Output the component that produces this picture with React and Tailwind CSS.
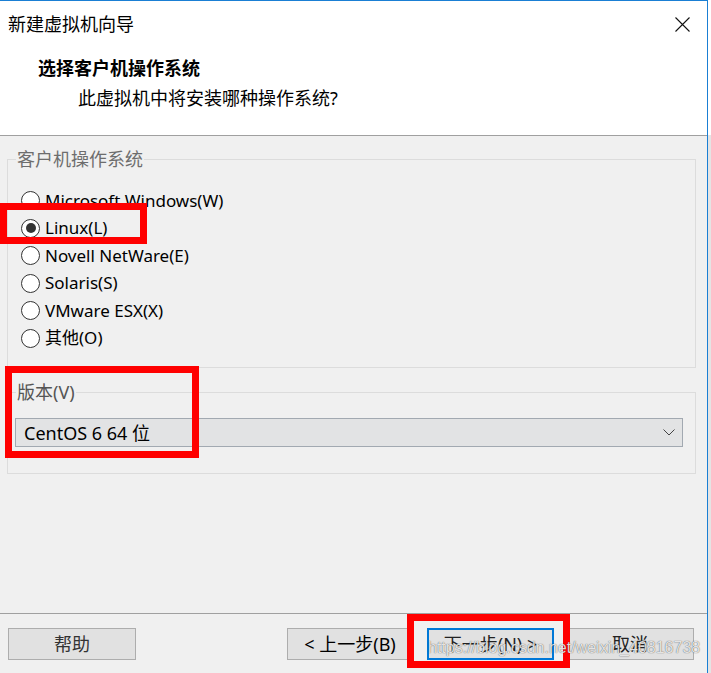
import React from 'react'

const FONT = { fontFamily: '"Noto Sans", "Noto Sans CJK SC", sans-serif' }

const OS_LIST = [
  { label: 'Microsoft Windows(W)' },
  { label: 'Linux(L)', checked: true },
  { label: 'Novell NetWare(E)' },
  { label: 'Solaris(S)' },
  { label: 'VMware ESX(X)' },
  { label: '其他(O)' },
]

function Radio({ checked }) {
  return (
    <span className="flex items-center justify-center w-[19px] h-[19px] rounded-full border border-[#333] bg-white shrink-0">
      {checked && <span className="w-[10px] h-[10px] rounded-full bg-[#333]" />}
    </span>
  )
}

function Button({ children, primary, className = '' }) {
  return (
    <button
      className={`h-[32px] flex items-center justify-center bg-[#e1e1e1] text-[18px] text-[#222] ${primary ? 'border-2 border-[#0078d7]' : 'border border-[#adadad]'} ${className}`}
    >
      {children}
    </button>
  )
}

export default function App() {
  return (
    <div className="relative flex w-[711px] h-[673px] overflow-hidden bg-[#f0f0f0]" style={FONT}>
      {/* window */}
      <div className="flex flex-col w-[708px] h-full border-t border-r border-[#1a7fd4]">
        {/* title + header */}
        <div className="h-[135px] bg-white border-b border-[#a0a0a0] shrink-0">
          <div className="h-[46px] flex items-center justify-between pl-[8px] pr-[17px]">
            <span className="text-[18px] leading-[24px] text-black">新建虚拟机向导</span>
            <svg width="15" height="15" viewBox="0 0 15 15">
              <path d="M0.5 0.5L14.5 14.5M14.5 0.5L0.5 14.5" stroke="#111" strokeWidth="1.1" fill="none" />
            </svg>
          </div>
          <div className="mt-[9px] pl-[38px] text-[18px] leading-[24px] font-bold text-black">选择客户机操作系统</div>
          <div className="mt-[6px] pl-[78px] text-[18px] leading-[24px] text-black">此虚拟机中将安装哪种操作系统?</div>
        </div>

        {/* body */}
        <div className="flex-1 pt-[13px]">
          <fieldset className="ml-[7px] w-[689px] border border-[#dcdcdc] px-0 pt-[18px] pb-[15px]">
            <legend className="ml-[8px] px-[1px] text-[18px] leading-[20px] text-[#6d6d6d]">客户机操作系统</legend>
            <div className="pl-[13px]">
              {OS_LIST.map((os) => (
                <div key={os.label} className="h-[27.5px] flex items-center gap-[5px]">
                  <Radio checked={os.checked} />
                  <span className="text-[17px] leading-[24px] text-black">{os.label}</span>
                </div>
              ))}
            </div>
          </fieldset>

          <fieldset className="mt-[14px] ml-[7px] w-[689px] border border-[#dcdcdc] px-0 pt-[16px] pb-[26px]">
            <legend className="ml-[8px] px-[1px] text-[18px] leading-[20px] text-[#555]">版本(V)</legend>
            <div className="ml-[7px] w-[668px] h-[29px] flex items-center justify-between pl-[8px] pr-[7px] bg-[#e2e3e4] border border-[#a2a9b1]">
              <span className="text-[18px] leading-[24px] text-black">CentOS 6 64 位</span>
              <svg width="12" height="7" viewBox="0 0 12 7">
                <path d="M0.5 0.5L6 6L11.5 0.5" stroke="#444" strokeWidth="1" fill="none" />
              </svg>
            </div>
          </fieldset>
        </div>

        {/* footer */}
        <div className="h-[60px] shrink-0 border-t border-[#a0a0a0] flex items-start pt-[14px] pl-[8px] pr-[13px]">
          <Button className="w-[128px] text-[#333]">帮助</Button>
          <div className="flex-1" />
          <Button className="w-[126px] text-black">&lt; 上一步(B)</Button>
          <Button primary className="w-[127px] ml-[14px]">下一步(N) &gt;</Button>
          <Button className="w-[128px] ml-[12px]">取消</Button>
        </div>
      </div>

      {/* strip of whatever lies behind the window */}
      <div className="w-[3px] h-full flex flex-col">
        <div className="h-[135px] bg-white" />
        <div className="flex-1 bg-[#e4e4e4]" />
      </div>

      {/* red annotation boxes */}
      <div className="absolute left-[0px] top-[203px] w-[147px] h-[41px] border-[7px] border-[#ff0000] pointer-events-none" />
      <div className="absolute left-[5px] top-[366px] w-[194px] h-[92px] border-[7px] border-[#ff0000] pointer-events-none" />
      <div className="absolute left-[407px] top-[614px] w-[163px] h-[54px] border-[7px] border-[#ff0000] pointer-events-none" />

      {/* watermark */}
      <div
        className="absolute left-[428px] top-[638px] text-[16px] leading-[20px] text-white/85 pointer-events-none [text-shadow:0_0_1px_rgba(0,0,0,0.8)]"
        style={{ fontFamily: '"Liberation Sans", Arial, sans-serif' }}
      >
        https://blog.csdn.net/weixin_40816738
      </div>
    </div>
  )
}
